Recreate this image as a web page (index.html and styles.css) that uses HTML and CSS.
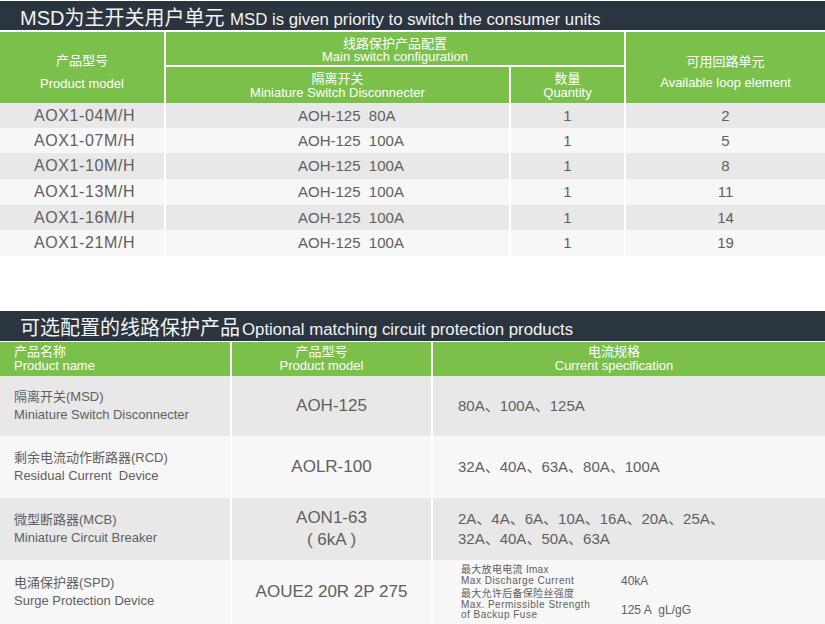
FILE: index.html
```html
<!DOCTYPE html>
<html lang="zh">
<head>
<meta charset="utf-8">
<title>MSD</title>
<link rel="stylesheet" href="styles.css">
</head>
<body>
<div class="page">
  <section class="sheet">
    <h1 class="title title-first"><span class="title-zh">MSD为主开关用户单元</span> <span class="title-en">MSD is given priority to switch the consumer units</span></h1>
    <table class="grid grid-main">
      <colgroup><col class="m1"><col class="m2"><col class="m3"><col class="m4"></colgroup>
      <thead>
        <tr class="h-top">
          <th rowspan="2" class="h-tall"><div class="stack stack-wide"><span>产品型号</span><span>Product model</span></div></th>
          <th colspan="2" class="sep h-group"><div class="stack stack-13"><span>线路保护产品配置</span><span>Main switch configuration</span></div></th>
          <th rowspan="2" class="sep h-tall"><div class="stack stack-loop"><span>可用回路单元</span><span>Available loop element</span></div></th>
        </tr>
        <tr class="h-sub">
          <th class="sep"><div class="stack stack-14"><span>隔离开关</span><span>Miniature Switch Disconnecter</span></div></th>
          <th class="sep"><div class="stack stack-13"><span>数量</span><span>Quantity</span></div></th>
        </tr>
      </thead>
      <tbody>
        <tr class="r-dark r25"><td class="model">AOX1-04M/H</td><td class="sep msd">AOH-125&nbsp;&nbsp;80A</td><td class="sep num">1</td><td class="sep num">2</td></tr>
        <tr class="r-light r25"><td class="model">AOX1-07M/H</td><td class="sep msd">AOH-125&nbsp;&nbsp;100A</td><td class="sep num">1</td><td class="sep num">5</td></tr>
        <tr class="r-dark r26"><td class="model">AOX1-10M/H</td><td class="sep msd">AOH-125&nbsp;&nbsp;100A</td><td class="sep num">1</td><td class="sep num">8</td></tr>
        <tr class="r-light r26"><td class="model">AOX1-13M/H</td><td class="sep msd">AOH-125&nbsp;&nbsp;100A</td><td class="sep num">1</td><td class="sep num">11</td></tr>
        <tr class="r-dark r25"><td class="model">AOX1-16M/H</td><td class="sep msd">AOH-125&nbsp;&nbsp;100A</td><td class="sep num">1</td><td class="sep num">14</td></tr>
        <tr class="r-light r26"><td class="model">AOX1-21M/H</td><td class="sep msd">AOH-125&nbsp;&nbsp;100A</td><td class="sep num">1</td><td class="sep num">19</td></tr>
      </tbody>
    </table>
  </section>

  <section class="sheet sheet-second">
    <h1 class="title title-second"><span class="title-zh">可选配置的线路保护产品</span><span class="title-en">Optional matching circuit protection products</span></h1>
    <table class="grid grid-options">
      <colgroup><col class="o1"><col class="o2"><col class="o3"></colgroup>
      <thead>
        <tr class="h-opt">
          <th class="name-head"><div class="stack stack-opt"><span>产品名称</span><span>Product name</span></div></th>
          <th class="sep model-head"><div class="stack stack-opt"><span>产品型号</span><span>Product model</span></div></th>
          <th class="sep spec-head"><div class="stack stack-opt"><span>电流规格</span><span>Current specification</span></div></th>
        </tr>
      </thead>
      <tbody>
        <tr class="r-dark r60">
          <td class="name"><div class="stack stack-name"><span>隔离开关(MSD)</span><span>Miniature Switch Disconnecter</span></div></td>
          <td class="sep part">AOH-125</td>
          <td class="sep rating">80A、100A、125A</td>
        </tr>
        <tr class="r-light r62">
          <td class="name"><div class="stack stack-name"><span>剩余电流动作断路器(RCD)</span><span>Residual Current&nbsp; Device</span></div></td>
          <td class="sep part">AOLR-100</td>
          <td class="sep rating">32A、40A、63A、80A、100A</td>
        </tr>
        <tr class="r-dark r62">
          <td class="name"><div class="stack stack-name"><span>微型断路器(MCB)</span><span>Miniature Circuit Breaker</span></div></td>
          <td class="sep part part-two">AON1-63<br>( 6kA )</td>
          <td class="sep rating rating-two">2A、4A、6A、10A、16A、20A、25A、<br>32A、40A、50A、63A</td>
        </tr>
        <tr class="r-light r64">
          <td class="name"><div class="stack stack-name"><span>电涌保护器(SPD)</span><span>Surge Protection Device</span></div></td>
          <td class="sep part">AOUE2 20R 2P 275</td>
          <td class="sep spec-cell">
            <div class="spec">
              <div class="spec-label"><span class="spec-zh">最大放电电流 Imax</span><span class="spec-en">Max Discharge Current</span></div>
              <div class="spec-value">40kA</div>
              <div class="spec-label spec-label-last"><span class="spec-zh">最大允许后备保险丝强度</span><span class="spec-en">Max. Permissible Strength</span><span class="spec-en">of Backup Fuse</span></div>
              <div class="spec-value spec-value-last">125 A&nbsp; gL/gG</div>
            </div>
          </td>
        </tr>
      </tbody>
    </table>
  </section>
</div>
</body>
</html>
```

FILE: styles.css
```css
html, body {
  margin: 0;
  padding: 0;
  background: #ffffff;
}

body {
  font-family: "Liberation Sans", "Noto Sans CJK SC", sans-serif;
  color: #606060;
}

.page {
  width: 825px;
  padding-top: 1px;
}

.sheet {
  width: 825px;
}

.sheet-second {
  margin-top: 55px;
}

.title {
  margin: 0;
  box-sizing: border-box;
  background: #2b3540;
  color: #f3f3f3;
  font-weight: normal;
  font-size: 20px;
  padding-left: 20px;
  white-space: nowrap;
}

.title-first {
  height: 31px;
  padding-top: 6px;
  line-height: 23px;
  border-bottom: 2px solid #ffffff;
}

.title-second {
  height: 31px;
  padding-top: 5px;
  line-height: 25px;
  border-bottom: 1px solid #ffffff;
}

.title-zh {
  font-size: 20px;
}

.title-en {
  font-size: 16.8px;
}

.title-second .title-en {
  margin-left: 2px;
}

.grid {
  width: 825px;
  table-layout: fixed;
  border-collapse: separate;
  border-spacing: 0;
}

.m1 { width: 164px; }
.m2 { width: 345px; }
.m3 { width: 115px; }
.m4 { width: 201px; }

.o1 { width: 230px; }
.o2 { width: 201px; }
.o3 { width: 394px; }

th, td {
  padding: 0;
  vertical-align: middle;
}

th {
  background: #7bc04b;
  color: #ffffff;
  font-weight: normal;
  font-size: 13px;
  text-align: center;
}

.sep {
  border-left: 2px solid #ffffff;
}

.h-top { height: 35px; }
.h-sub { height: 36px; }

.h-group {
  border-bottom: 2px solid #ffffff;
}

.stack {
  display: flex;
  flex-direction: column;
  align-items: center;
}

.stack-wide {
  line-height: 16px;
  gap: 7px;
  padding-top: 10px;
}

.stack-loop {
  line-height: 16px;
  gap: 5px;
  padding-top: 10px;
}

.stack-13 {
  line-height: 13.5px;
  padding-top: 3px;
}

.h-sub .stack-13 {
  padding-top: 1px;
}

.stack-14 {
  line-height: 14px;
  padding-top: 2px;
}

.r-dark td { background: #e8e8e8; }
.r-light td { background: #f7f7f7; }

.r25 { height: 25px; }
.r26 { height: 26px; }
.r60 { height: 60px; }
.r62 { height: 62px; }
.r64 { height: 64px; }

.model {
  padding-left: 34px;
  font-size: 16px;
  letter-spacing: 0.6px;
  line-height: 20px;
}

.msd {
  padding-left: 132px;
  font-size: 15px;
  line-height: 20px;
}

.num {
  text-align: center;
  font-size: 15px;
  line-height: 20px;
}

.h-opt { height: 34px; }

.stack-opt {
  line-height: 14.5px;
}

.name-head .stack {
  align-items: flex-start;
  padding-left: 14px;
}

.model-head .stack {
  padding-right: 20px;
}

.spec-head .stack {
  padding-right: 30px;
}

.name .stack {
  align-items: flex-start;
  padding-left: 14px;
  font-size: 13px;
  line-height: 18px;
}

.part {
  text-align: center;
  font-size: 17px;
  line-height: 22px;
  white-space: nowrap;
}

.rating {
  padding-left: 25px;
  font-size: 15px;
  line-height: 20px;
}

.spec-cell {
  padding-left: 28px;
}

.spec {
  display: grid;
  grid-template-columns: 160px auto;
  row-gap: 2px;
}

.spec-label {
  display: flex;
  flex-direction: column;
}

.spec-zh {
  font-size: 10px;
  line-height: 12px;
  letter-spacing: 0.3px;
}

.spec-en {
  font-size: 10px;
  line-height: 10px;
  letter-spacing: 0.5px;
}

.spec-value {
  align-self: end;
  font-size: 12px;
  line-height: 10px;
  padding-bottom: 0;
}

.spec-value-last {
  padding-bottom: 5px;
}
```
